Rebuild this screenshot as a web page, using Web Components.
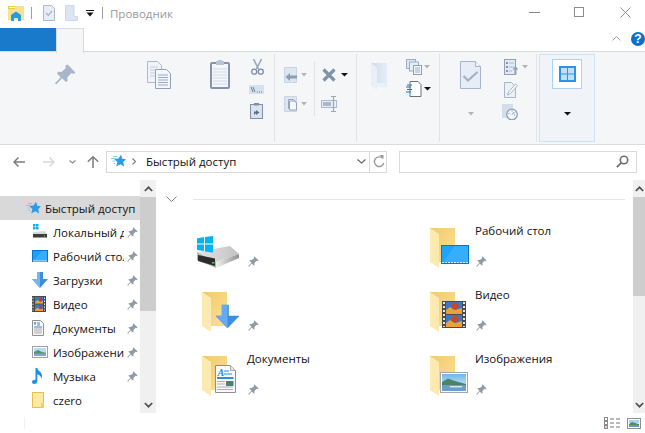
<!DOCTYPE html>
<html lang="ru">
<head>
<meta charset="utf-8">
<title>Проводник</title>
<style>
  html, body { margin: 0; height: 100%; background: #fff; overflow: hidden; }
  body { font: 11.5px "Open Sans", "Noto Sans", sans-serif; color: #111; }
</style>
</head>
<body>
<x-explorer></x-explorer>
<script>
// folder drawn in a 48x48 box, the overlays sit on top of it
const FOLDER = `
  <defs><linearGradient id="fb" x1="0" y1="0" x2="1" y2="1"><stop offset="0" stop-color="#eecb72"/><stop offset="1" stop-color="#ffe08c"/></linearGradient></defs>
  <rect x="8" y="4" width="25" height="34" fill="url(#fb)"/>
  <polygon points="8,4 17,10 17,44 8,38" fill="#fdeab0"/>`;

const ICONS = {
  // ---- small pin and ribbon glyphs
  pin: [11, 11, `<path fill="#8f9ba6" d="M6.6.4l4 4-.9.8-1.1-.4-2.2 2.3.2 1.8-.9.6-2-2L1 10.7l-.7-.7 3.2-3.2-2-2 .6-.9 1.8.2 2.3-2.2-.4-1.1z"/>`],
  bigpin: [21, 21, `<path fill="#a9b6c8" d="M12.6.6l7.8 7.8-1.8 1.5-2.2-.8-4.2 4.4.4 3.4-1.7 1.2-3.8-3.8L1.2 20.4 0 19.2l5.7-5.9-3.8-3.8 1.2-1.8 3.4.4 4.4-4.2-.8-2.2z"/>`],
  arrow: [6, 4, `<polygon points="0,0 6,0 3,3.5" fill="#b4b4b4"/>`],
  arrowk: [7, 4, `<polygon points="0,0 7,0 3.5,3.5" fill="#111"/>`],
  qatarrow: [8, 7, `<rect x="0" y="0" width="8" height="1" fill="#111"/><polygon points="0.5,2.5 7.5,2.5 4,6.5" fill="#111"/>`],
  appicon: [16, 15, `<rect x="0" y="0" width="16" height="14" fill="#fbe08f"/><rect x="0" y="0" width="7" height="3" fill="#f2c94f"/><rect x="1" y="1" width="6" height="1" fill="#fff"/><path fill="#1f9bea" d="M3 15V9l5-3.500L13 9v6h-3v-3H6v3z"/>`],
  qatcheck: [12, 16, `<path d="M.5.5h8l3 3v12H.5z" fill="#e6edf6" stroke="#a9bad0"/><path d="M3 8l2.300 2.300L9 6" fill="none" stroke="#a3b2c6" stroke-width="1.2"/>`],
  qatdoc: [13, 16, `<path d="M.5.5h8.5v11l3.500.1v3.900H.5z" fill="#dce6f3" stroke="#ccd8e8"/>`],
  copy: [24, 28, `<path d="M.5.5h10l4 4v17H.5z" fill="#f0f3f8" stroke="#aab9cc"/><g stroke="#c3cedd"><path d="M3 6h8M3 9h8M3 12h8M3 15h8"/></g><path d="M8.500 8.500h11l4 4v15h-15z" fill="#f5f7fa" stroke="#8ea2bc"/><g stroke="#99a9bf"><path d="M11 14h10M11 16.500h10M11 19h10M11 21.500h10M11 24h10"/></g>`],
  paste: [20, 29, `<rect x="1" y="3" width="18" height="25" rx="1" fill="#f3f6fa" stroke="#8494ad" stroke-width="2"/><rect x="6" y="1" width="8" height="4" fill="#b9c4d3"/><rect x="8" y="0" width="4" height="2" fill="#b9c4d3"/><g stroke="#cfd9e6"><path d="M3 9h14M3 12h14M3 15h14M3 18h14M3 21h14M3 24h14"/></g>`],
  scissors: [13, 16, `<path d="M2.500 0L7.500 10M10.500 0L5.500 10" stroke="#98a6ba" stroke-width="1.6" fill="none"/><circle cx="3.200" cy="12.700" r="2.500" fill="none" stroke="#7b8ba4" stroke-width="1.3"/><circle cx="9.800" cy="12.700" r="2.500" fill="none" stroke="#7b8ba4" stroke-width="1.3"/>`],
  pathbtn: [15, 9, `<rect width="15" height="9" fill="#d7e1ee"/><path d="M2 2l2 5M4 2l2 5" stroke="#6f7f97"/><path d="M8 7h1M10 7h1M12 7h1" stroke="#6f7f97"/>`],
  shortcut: [13, 16, `<rect x=".5" y="1.500" width="12" height="14" fill="#dbe3ee" stroke="#8090a8"/><rect x="4" y="0" width="5" height="2.500" fill="#8090a8"/><path d="M4 12V8.500h2V7l3.500 2.500L6 12v-1.600H5.600z" fill="#606f88"/>`],
  moveto: [13, 16, `<path d="M.5.5h12v15H.5z" fill="#dce6f2" stroke="#c9d5e5"/><path d="M6 8.500h7v3H6v2.500L1.500 10 6 6z" fill="#8c9cb4"/>`],
  copyto: [13, 16, `<path d="M.5.5h12v15H.5z" fill="#dce6f2" stroke="#c9d5e5"/><path d="M4.500 3.500h5l2 2v7h-7z" fill="#eef2f8" stroke="#93a3b9"/><path d="M6.500 6h5l2 2v7h-7z" fill="#f5f7fa" stroke="#93a3b9" transform="translate(-1 -1)"/>`],
  del: [14, 14, `<path d="M1.500 1.500l11 11M12.500 1.500l-11 11" stroke="#8193ab" stroke-width="3.2"/>`],
  rename: [16, 16, `<rect x=".5" y="4.500" width="15" height="7" fill="#e8eef6" stroke="#a9b8cc"/><rect x="2" y="6" width="8" height="4" fill="#a9b8cc"/><path d="M10 .5h5M12.500.5v15M10 15.500h5" stroke="#98a8bd" stroke-width="1.2"/>`],
  newfolder: [18, 27, `<defs><linearGradient id="nf" x1="0" y1="0" x2="1" y2="0"><stop offset="0" stop-color="#cfdcee"/><stop offset="1" stop-color="#e6edf6"/></linearGradient></defs><rect x="0" y="0" width="16" height="23" fill="url(#nf)"/><polygon points="0,0 6,5 6,27 0,23" fill="#e9eff7"/><polygon points="14,20 18,24 6,24 6,20" fill="#eaf0f7"/>`],
  newitem: [16, 16, `<rect x=".5" y=".5" width="9" height="9" fill="#dfe7f1" stroke="#9cadc2"/><rect x="3.500" y="3" width="9" height="9" fill="#e8eef6" stroke="#9cadc2"/><rect x="7.500" y="6.500" width="8" height="9" fill="#f3f6fa" stroke="#8c9db4"/><path d="M9 9h5M9 11h5M9 13h5" stroke="#9cadc2"/>`],
  easy: [16, 16, `<path d="M4 .5h8l3 3v12H4z" fill="#fff" stroke="#707070"/><path d="M0 7h5M1 9.500h5M0 12h5M1 5h5" stroke="#1a73c4" transform="translate(0 -1)"/>`],
  props: [21, 28, `<path d="M.5.5h15l5 5v22H.5z" fill="#e6edf6" stroke="#a5b4ca"/><path d="M15.500.5v5h5" fill="#f7f9fc" stroke="#a5b4ca"/><path d="M3.500 15l4.500 4.500L17.500 11" fill="none" stroke="#a4b1c3" stroke-width="2.2"/>`],
  open: [14, 16, `<rect x=".5" y=".5" width="11" height="15" fill="#e4ebf4" stroke="#8fa0b6"/><path d="M2 3h2v2H2zM2 7h2v2H2zM2 11h2v2H2z" fill="#8796ac"/><path d="M5 4h5M5 8h5M5 12h3" stroke="#aeb9c8"/><path d="M10.500 15.500v-5h-2l3-3.500 3 3.500h-2v5z" fill="#8fa0b6"/>`],
  edit: [14, 16, `<path d="M.5.5h7l4 4v11H.5z" fill="#ecf1f7" stroke="#a6b5c9"/><path d="M3.500 13l1-3 7-8 2 1.600-7 8z" fill="#fafbfd" stroke="#a6b5c9"/>`],
  history: [16, 16, `<rect x="0" y="0" width="11" height="14" fill="#d3deeb"/><circle cx="10" cy="10.500" r="5.300" fill="#f2f5f9" stroke="#8c9cb2" stroke-width="1.2"/><path d="M10 10.500l2.500-2.500M7 9v1M10 6.500v1M13 11h-1" stroke="#748399"/>`],
  tiles: [17, 16, `<rect x="1" y="1" width="15" height="14" fill="#bfe0f9" stroke="#2e93e6" stroke-width="2"/><path d="M1 8h15M8.500 1v14" stroke="#2e93e6"/>`],

  // ---- window and toolbar glyphs
  minimize: [11, 1, `<rect width="11" height="1" fill="#8c8c8c"/>`],
  maximize: [10, 10, `<rect x=".5" y=".5" width="9" height="9" fill="none" stroke="#8c8c8c"/>`],
  close: [11, 11, `<path d="M.5.5l10 10M10.500.5l-10 10" stroke="#8c8c8c" fill="none"/>`],
  chevup: [9, 5, `<path d="M.5 4.500l4-4 4 4" fill="none" stroke="#a3a3a3"/>`],
  help: [14, 14, `<circle cx="7" cy="7" r="7" fill="#0c6fc9"/><text x="7" y="11" font-family="Liberation Sans" font-weight="700" font-size="12" fill="#fff" text-anchor="middle">?</text>`],
  back: [12, 10, `<path d="M5.500.5L1 5l4.500 4.500M1.500 5H12" fill="none" stroke="#7c7c7c" stroke-width="1.5"/>`],
  forward: [12, 10, `<path d="M6.500.5L11 5l-4.500 4.500M10.500 5H0" fill="none" stroke="#d9d9d9" stroke-width="1.5"/>`],
  recent: [7, 4, `<path d="M.5.5L3.500 3l3-2.500" fill="none" stroke="#8a8a8a" stroke-width="1.2"/>`],
  up: [12, 12, `<path d="M.8 5.800L6 .8l5.200 5M6 1.200V12" fill="none" stroke="#7c7c7c" stroke-width="1.5"/>`],
  crumb: [4, 7, `<path d="M.5.5l3 3-3 3" fill="none" stroke="#7a7a7a" stroke-width="1.1"/>`],
  drop: [9, 5, `<path d="M.5.5l4 3.500 4-3.500" fill="none" stroke="#666" stroke-width="1.2"/>`],
  refresh: [12, 13, `<path d="M9.500 3.200A4.800 4.800 0 1 0 10.800 8" fill="none" stroke="#9a9a9a" stroke-width="1.4"/><polygon points="6.500,0 10.500,0 10.500,4" fill="#9a9a9a"/>`],
  search: [13, 13, `<circle cx="8" cy="5" r="3.700" fill="none" stroke="#6e6e6e" stroke-width="1.6"/><path d="M5.200 7.800L.8 12.200" stroke="#6e6e6e" stroke-width="1.8"/>`],
  sbup: [9, 6, `<path d="M.8 5L4.500 1.300 8.200 5" fill="none" stroke="#505050" stroke-width="1.7"/>`],
  sbdown: [9, 6, `<path d="M.8 1L4.500 4.700 8.200 1" fill="none" stroke="#505050" stroke-width="1.7"/>`],
  collapse: [11, 6, `<path d="M.5.5l5 5 5-5" fill="none" stroke="#808080"/>`],
  listview: [17, 12, `<rect x=".5" y=".5" width="3" height="3" fill="none" stroke="#8a8a8a"/><rect x=".5" y="4.500" width="3" height="3" fill="none" stroke="#8a8a8a"/><rect x=".5" y="8.500" width="3" height="3" fill="#fff" stroke="#8a8a8a"/><rect x="1.500" y="9.500" width="1" height="1" fill="#d33"/><path d="M6 2h4M12 2h4M6 6h4M12 6h4M6 10h4M12 10h4" stroke="#777"/>`],
  tileview: [14, 11, `<rect x=".5" y=".5" width="13" height="10" fill="#fff" stroke="#8f8f8f"/><rect x="2" y="2" width="10" height="3" fill="#a8d3f0"/><path d="M2 6l3-2 3 1 4 1v3H2z" fill="#4f8a6c"/><rect x="2" y="7" width="10" height="2" fill="#6b95bd"/>`],

  // ---- sidebar icons, 16px
  star: [15, 15, `<path fill="#2b9ce8" d="M10 .8l1.300 4 3.700.4-2.800 2.800.9 4.500-3.800-2.300-4 2.200 1-4.400-3-2.900 4.200-.5z"/><path d="M6 2.500H2M5 4.500H0M4 7H1.500M4 9.500H2.500" stroke="#7cc6f2" stroke-width=".9"/>`],
  navdrive: [16, 16, `<rect x="1" y="0" width="2.500" height="2.500" fill="#16a9ea"/><rect x="4" y="0" width="2.500" height="2.500" fill="#16a9ea"/><rect x="1" y="3" width="2.500" height="2.500" fill="#16a9ea"/><rect x="4" y="3" width="2.500" height="2.500" fill="#16a9ea"/><path d="M1 8l12-1 2 2.500V11H1z" fill="#d7d7d7"/><rect x="1" y="10" width="14" height="4" fill="#3b3b3b"/><rect x="1" y="13" width="14" height="1" fill="#9a9a9a"/><rect x="12" y="11.500" width="1" height="1" fill="#4ee24e"/>`],
  desktop: [16, 12, `<rect x=".5" y=".5" width="15" height="11" fill="#1f9dfb" stroke="#0b74c6"/><polygon points="1,11 10,1 15,1 15,11" fill="#35acfc"/><rect x="1" y="10.500" width="14" height="1" fill="#cfe9fd"/>`],
  download: [16, 16, `<path fill="#3b8fdf" d="M5 0h6v7h5l-8 9-8-9h5z"/><path fill="#72b5ef" d="M5 0h3v16L0 7h5z"/>`],
  film: [14, 16, `<rect width="14" height="16" fill="#4a4a4a"/><rect x="3" y="1" width="8" height="6.500" fill="#3e77c4"/><rect x="3" y="8.500" width="8" height="6.500" fill="#3e77c4"/><path d="M3 6l3-2 2 2 3-1v2.500H3zM3 13.500l3-2 2 2 3-1V15H3z" fill="#e8a23a"/><rect x="7" y="2" width="3" height="3" fill="#c33"/><rect x="7" y="9.500" width="3" height="3" fill="#c33"/><path d="M1 1.500v13M12.500 1.500v13" stroke="#e4e4e4" stroke-dasharray="1.500 1.500"/>`],
  doc: [12, 16, `<path d="M.5.5h8l3 3v12H.5z" fill="#fafafa" stroke="#8f8f8f"/><path d="M2 3h2M3 2v3" stroke="#2b8ad6"/><path d="M5 3h3M5 5h3M2 7h8" stroke="#2b8ad6"/><path d="M2 9h8M2 11h8M2 13h8" stroke="#a6a6a6"/>`],
  picture: [16, 12, `<rect x=".5" y=".5" width="15" height="11" fill="#fff" stroke="#a0a0a0"/><rect x="2" y="2" width="12" height="4" fill="#b5dcf4"/><path d="M2 6l4-2 4 2 4 .5V8H2z" fill="#5b8f72"/><rect x="2" y="7.500" width="12" height="2.500" fill="#7fa7cb"/>`],
  music: [11, 16, `<path fill="#1d8fe6" d="M3.500 0h1.800c.3 3 4.700 3.500 4.700 8 0 1-.3 2-.8 2.800.1-2.800-2.200-4-3.900-4.600V13c0 1.800-1.400 3-3.200 3C.8 16 0 15.200 0 14c0-1.400 1.500-2.400 3.500-2.200z"/>`],
  navfolder: [12, 16, `<rect x=".5" y=".5" width="11" height="15" fill="#fde9a1" stroke="#e8c04a"/><rect x="9" y="11" width="3" height="5" fill="#f4cf5a"/>`],

  // ---- large tile icons, 48px box
  drive: [48, 48, `
    <defs><linearGradient id="t" x1="0" y1="0" x2="1" y2="0"><stop offset="0" stop-color="#e4e4e4"/><stop offset="1" stop-color="#c2c2c2"/></linearGradient>
    <linearGradient id="s" x1="0" y1="0" x2="1" y2="0"><stop offset="0" stop-color="#f2f2f2"/><stop offset="1" stop-color="#8f8f8f"/></linearGradient></defs>
    <polygon points="3,28 36,22 45,30 22,38" fill="url(#t)"/>
    <polygon points="3,28 22,38 22,44 3,36" fill="#b7b7b7"/>
    <polygon points="22,38 45,30 45,34 22,44" fill="url(#s)"/>
    <polygon points="4,31 21,34.500 21,42 4,37" fill="#2d2d2d"/>
    <rect x="18" y="38" width="2.500" height="1.500" fill="#3ede3e"/>
    <polygon points="3,14.500 10,13 10,19.500 3,19.500" fill="#00b4f0"/><polygon points="11,13 19,12 19,19.500 11,19.500" fill="#00b4f0"/>
    <polygon points="3,20.500 10,20.500 10,27 3,26" fill="#00b4f0"/><polygon points="11,20.500 19,20.500 19,28.500 11,27.500" fill="#00b4f0"/>`],
  fdownload: [48, 48, FOLDER + `
    <path fill="#3c8fe0" stroke="#2d7fce" stroke-width=".5" d="M28 17h6.500v11H45L33.500 40 22 28h6z"/><path fill="#63adee" d="M28 17h5.500v23L22 28h6z"/>`],
  fdesktop: [48, 48, FOLDER + `
    <rect x="19.500" y="21.500" width="27" height="18" fill="#1ea4ff" stroke="#0b73c4"/><polygon points="21,38 33,22 46,22 46,38" fill="#35aefc"/>
    <path d="M20 38.500h26" stroke="#d7eefe" stroke-dasharray="2 1"/>`],
  fvideo: [48, 48, FOLDER + `
    <rect x="20" y="13" width="24" height="27" fill="#4a4a4a"/><rect x="24" y="14" width="16" height="12" fill="#3e77c4"/><rect x="24" y="27" width="16" height="12" fill="#3e77c4"/>
    <path d="M24 22l4-3 5 3 7-2v6H24zM24 35l4-3 5 3 7-2v6H24z" fill="#e8a23a"/><circle cx="33" cy="18" r="3.500" fill="#c8462e"/><circle cx="33" cy="31" r="3.500" fill="#c8462e"/>
    <path d="M22 14v25M42 14v25" stroke="#e6e6e6" stroke-width="2" stroke-dasharray="2 2"/>`],
  fdocs: [48, 48, FOLDER + `
    <path d="M21.500 13.500h15l5 5v22h-20z" fill="#fafafa" stroke="#8f8f8f"/><path d="M36.500 13.500v5h5" fill="#e4e4e4" stroke="#a8a8a8"/>
    <text x="23.500" y="24" font-family="Liberation Serif" font-style="italic" font-weight="700" font-size="10" fill="#1f8be0">A</text>
    <path d="M30 19h5M30 22h8M23 25.500h16.500M23 26.500h16.500" stroke="#2b8ee0"/><path d="M23 29.500h8M23 32h8M23 35h16M23 37.500h16" stroke="#aeaeae"/>
    <rect x="32" y="29" width="7.500" height="5" fill="#4f7f76"/>`],
  fpicture: [48, 48, FOLDER + `
    <defs><linearGradient id="sky" x1="0" y1="0" x2="0" y2="1"><stop offset="0" stop-color="#6db8ea"/><stop offset="1" stop-color="#e6f4fa"/></linearGradient></defs>
    <rect x="18.500" y="20.500" width="27" height="20" fill="#fff" stroke="#a6a6a6"/><rect x="20" y="22" width="24" height="17" fill="url(#sky)" />
    <path d="M20 30l6-3.500 7 2.500 11 3v1H20z" fill="#4c8469"/><rect x="20" y="33" width="24" height="6" fill="#6a9fca"/><rect x="28" y="34" width="12" height="1.500" fill="#cfe3ef"/>`],
};

class XIcon extends HTMLElement {
  connectedCallback() {
    const [w, h, body] = ICONS[this.getAttribute('name')];
    this.attachShadow({ mode: 'open' }).innerHTML = `
      <style>:host { display: block; flex: none; width: ${w}px; height: ${h}px; } svg { display: block; }</style>
      <svg width="${w}" height="${h}" viewBox="0 0 ${w} ${h}">${body}</svg>`;
  }
}

class XTitlebar extends HTMLElement {
  connectedCallback() {
    this.attachShadow({ mode: 'open' }).innerHTML = `
      <style>
        :host { display: flex; align-items: center; height: 28px; padding: 0 0 2px 8px; box-sizing: border-box; color: #999; }
        .sep { width: 1px; height: 12px; background: #9f9f9f; }
        .title { margin-left: 7px; flex: 1; }
        .ctl { display: flex; align-items: center; margin-right: 14px; padding-bottom: 2px; }
      </style>
      <x-icon name="appicon"></x-icon>
      <span class="sep" style="margin-left:7px"></span>
      <x-icon name="qatcheck" style="margin-left:11px"></x-icon>
      <x-icon name="qatdoc" style="margin-left:10px"></x-icon>
      <x-icon name="qatarrow" style="margin-left:8px"></x-icon>
      <span class="sep" style="margin-left:8px"></span>
      <span class="title">Проводник</span>
      <div class="ctl">
        <x-icon name="minimize"></x-icon>
        <x-icon name="maximize" style="margin-left:34px"></x-icon>
        <x-icon name="close" style="margin-left:36px"></x-icon>
      </div>`;
  }
}

class XTabs extends HTMLElement {
  connectedCallback() {
    this.attachShadow({ mode: 'open' }).innerHTML = `
      <style>
        :host { display: flex; align-items: stretch; height: 24px; box-sizing: border-box; border-bottom: 1px solid #dadbdc; }
        .file { width: 56px; background: #1979ca; }
        .tab { width: 26px; height: 24px; background: #f5f6f7; border: 1px solid #dadbdc; border-bottom: 0; }
        .right { flex: 1; display: flex; align-items: center; justify-content: flex-end; gap: 10px; padding-bottom: 2px; }
      </style>
      <div class="file"></div>
      <div class="tab"></div>
      <div class="right">
        <x-icon name="chevup"></x-icon>
        <x-icon name="help"></x-icon>
      </div>`;
  }
}

class XRibbon extends HTMLElement {
  connectedCallback() {
    // each group is a row, the stacked small buttons are columns inside it
    this.attachShadow({ mode: 'open' }).innerHTML = `
      <style>
        :host { display: flex; height: 93px; box-sizing: border-box; padding-top: 2px; background: #f5f6f7; border-bottom: 1px solid #dadbdc; }
        .group { display: flex; align-items: flex-start; height: 88px; box-sizing: border-box; border-right: 1px solid #e1e3e6; }
        .col { display: flex; flex-direction: column; align-items: flex-start; }
        .btn { display: flex; align-items: center; gap: 4px; }
        .inner { width: 1px; height: 55px; margin-top: 7px; background: #e1e3e6; }
        .active { width: 54px; height: 86px; margin-left: 2px; display: flex; flex-direction: column; align-items: center;
                  background: #f0f4f9; border: 1px solid #cce4f7; }
        .view { width: 28px; height: 28px; margin-top: 4px; display: flex; align-items: center; justify-content: center;
                background: #fff; border: 1px solid #a9d4f7; }
      </style>
      <div class="group" style="width:275px">
        <x-icon name="bigpin" style="margin:10px 0 0 55px"></x-icon>
        <x-icon name="copy" style="margin:7px 0 0 71px"></x-icon>
        <x-icon name="paste" style="margin:6px 0 0 39px"></x-icon>
        <div class="col" style="margin:5px 0 0 19px">
          <x-icon name="scissors" style="margin-left:2px"></x-icon>
          <x-icon name="pathbtn" style="margin-top:10px"></x-icon>
          <x-icon name="shortcut" style="margin:9px 0 0 1px"></x-icon>
        </div>
      </div>
      <div class="group" style="width:82px">
        <div class="col" style="margin:13px 0 0 9px">
          <div class="btn"><x-icon name="moveto"></x-icon><x-icon name="arrow"></x-icon></div>
          <div class="btn" style="margin-top:13px"><x-icon name="copyto"></x-icon><x-icon name="arrow"></x-icon></div>
        </div>
        <div class="inner" style="margin-left:7px"></div>
        <div class="col" style="margin:14px 0 0 7px">
          <div class="btn"><x-icon name="del"></x-icon><x-icon name="arrowk" style="margin-left:1px"></x-icon></div>
          <x-icon name="rename" style="margin:14px 0 0 -1px"></x-icon>
        </div>
      </div>
      <div class="group" style="width:83px">
        <x-icon name="newfolder" style="margin:9px 0 0 14px"></x-icon>
        <div class="col" style="margin:5px 0 0 17px">
          <div class="btn" style="gap:2px"><x-icon name="newitem"></x-icon><x-icon name="arrow"></x-icon></div>
          <div class="btn" style="gap:2px;margin-top:6px"><x-icon name="easy"></x-icon><x-icon name="arrowk"></x-icon></div>
        </div>
      </div>
      <div class="group" style="width:97px">
        <div class="col" style="margin:7px 0 0 20px;align-items:center">
          <x-icon name="props"></x-icon>
          <x-icon name="arrow" style="margin-top:23px"></x-icon>
        </div>
        <div class="col" style="margin:5px 0 0 21px">
          <div class="btn" style="gap:4px;margin-left:2px"><x-icon name="open"></x-icon><x-icon name="arrow"></x-icon></div>
          <x-icon name="edit" style="margin:7px 0 0 2px"></x-icon>
          <x-icon name="history" style="margin-top:6px"></x-icon>
        </div>
      </div>
      <div class="active">
        <div class="view"><x-icon name="tiles"></x-icon></div>
        <x-icon name="arrowk" style="margin-top:23px"></x-icon>
      </div>`;
  }
}

class XAddressbar extends HTMLElement {
  connectedCallback() {
    this.attachShadow({ mode: 'open' }).innerHTML = `
      <style>
        :host { display: flex; align-items: center; height: 35px; box-sizing: border-box; padding: 0 8px 2px 13px; color: #111; }
        .box { display: flex; align-items: center; height: 22px; box-sizing: border-box; border: 1px solid #d9d9d9; }
        .addr { width: 281px; margin-left: 7px; padding-left: 4px; }
        .find { width: 238px; margin-left: 12px; justify-content: flex-end; padding-right: 7px; }
        .path { flex: 1; margin-left: 10px; }
        .split { width: 1px; height: 20px; margin: 0 3px 0 3px; background: #d9d9d9; }
      </style>
      <x-icon name="back"></x-icon>
      <x-icon name="forward" style="margin-left:18px"></x-icon>
      <x-icon name="recent" style="margin-left:14px"></x-icon>
      <x-icon name="up" style="margin-left:11px"></x-icon>
      <div class="box addr">
        <x-icon name="star"></x-icon>
        <x-icon name="crumb" style="margin-left:6px"></x-icon>
        <span class="path">Быстрый доступ</span>
        <x-icon name="drop"></x-icon>
        <span class="split"></span>
        <x-icon name="refresh" style="margin-right:1px"></x-icon>
      </div>
      <div class="box find"><x-icon name="search"></x-icon></div>`;
  }
}

class XScrollbar extends HTMLElement {
  connectedCallback() {
    this.attachShadow({ mode: 'open' }).innerHTML = `
      <style>
        :host { display: flex; flex-direction: column; align-items: center; flex: none; box-sizing: border-box; background: #f0f0f0; }
        .btn { display: flex; align-items: center; justify-content: center; height: 17px; width: 100%; flex: none; }
        .thumb { width: 100%; height: ${this.getAttribute('thumb')}px; background: #cdcdcd; flex: none; }
        .fill { flex: 1; }
      </style>
      <div class="btn"><x-icon name="sbup"></x-icon></div>
      <div class="thumb"></div>
      <div class="fill"></div>
      <div class="btn"><x-icon name="sbdown"></x-icon></div>`;
  }
}

class XNavItem extends HTMLElement {
  connectedCallback() {
    const pinned = this.hasAttribute('pinned');
    const top = this.hasAttribute('selected');
    this.attachShadow({ mode: 'open' }).innerHTML = `
      <style>
        :host { display: flex; align-items: center; height: 24px; padding-left: ${top ? 26 : 32}px; box-sizing: border-box; }
        :host([selected]) { background: #d9d9d9; }
        .ico { width: ${top ? 19 : 21}px; display: flex; flex: none; }
        .label { flex: 1; min-width: 0; overflow: hidden; white-space: nowrap; }
        .pin { width: 16px; flex: none; }
      </style>
      <div class="ico"><x-icon name="${this.getAttribute('icon')}"></x-icon></div>
      <span class="label"><slot></slot></span>
      ${pinned ? '<div class="pin"><x-icon name="pin" style="margin-left:3px"></x-icon></div>' : ''}`;
  }
}

class XTile extends HTMLElement {
  connectedCallback() {
    this.attachShadow({ mode: 'open' }).innerHTML = `
      <style>
        :host { display: flex; height: 64px; }
        .ico { width: 53px; flex: none; }
        .side { display: flex; flex-direction: column; justify-content: space-between; height: 44px; margin-top: -1px; padding-bottom: 1px; }
      </style>
      <div class="ico"><x-icon name="${this.getAttribute('icon')}"></x-icon></div>
      <div class="side">
        <span><slot></slot></span>
        <x-icon name="pin" style="margin-left:1px"></x-icon>
      </div>`;
  }
}

class XContent extends HTMLElement {
  connectedCallback() {
    this.attachShadow({ mode: 'open' }).innerHTML = `
      <style>
        :host { display: block; flex: 1; min-width: 0; overflow: hidden; }
        .head { display: flex; align-items: center; height: 44px; padding: 0 8px 6px 10px; box-sizing: border-box; }
        .line { flex: 1; height: 1px; margin-left: 16px; background: #e5e5e5; }
        .grid { display: grid; grid-template-columns: 228px 228px; padding-left: 38px; }
      </style>
      <div class="head"><x-icon name="collapse"></x-icon><div class="line"></div></div>
      <div class="grid"><slot></slot></div>`;
  }
}

class XStatusbar extends HTMLElement {
  connectedCallback() {
    this.attachShadow({ mode: 'open' }).innerHTML = `
      <style>
        :host { display: flex; align-items: center; justify-content: flex-end; height: 20px; padding-right: 4px; gap: 6px; }
        .mark { width: 1px; height: 12px; background: #f0f0f0; margin-right: auto; margin-left: 24px; }
      </style>
      <div class="mark"></div>
      <x-icon name="listview"></x-icon>
      <x-icon name="tileview"></x-icon>`;
  }
}

class XExplorer extends HTMLElement {
  connectedCallback() {
    this.attachShadow({ mode: 'open' }).innerHTML = `
      <style>
        :host { display: block; width: 645px; height: 433px; overflow: hidden; }
        .work { display: flex; height: 233px; }
        .nav { width: 140px; flex: none; padding-top: 16px; box-sizing: border-box; overflow: hidden; }
      </style>
      <x-titlebar></x-titlebar>
      <x-tabs></x-tabs>
      <x-ribbon></x-ribbon>
      <x-addressbar></x-addressbar>
      <div class="work">
        <div class="nav">
          <x-nav-item icon="star" selected>Быстрый доступ</x-nav-item>
          <x-nav-item icon="navdrive" pinned>Локальный диск</x-nav-item>
          <x-nav-item icon="desktop" pinned>Рабочий стол</x-nav-item>
          <x-nav-item icon="download" pinned>Загрузки</x-nav-item>
          <x-nav-item icon="film" pinned>Видео</x-nav-item>
          <x-nav-item icon="doc" pinned>Документы</x-nav-item>
          <x-nav-item icon="picture" pinned>Изображения</x-nav-item>
          <x-nav-item icon="music" pinned>Музыка</x-nav-item>
          <x-nav-item icon="navfolder">czero</x-nav-item>
        </div>
        <x-scrollbar thumb="114" style="width:16px"></x-scrollbar>
        <x-content>
          <x-tile icon="drive"></x-tile>
          <x-tile icon="fdesktop">Рабочий стол</x-tile>
          <x-tile icon="fdownload"></x-tile>
          <x-tile icon="fvideo">Видео</x-tile>
          <x-tile icon="fdocs">Документы</x-tile>
          <x-tile icon="fpicture">Изображения</x-tile>
        </x-content>
        <x-scrollbar thumb="99" style="width:12px"></x-scrollbar>
      </div>
      <x-statusbar></x-statusbar>`;
  }
}

customElements.define('x-icon', XIcon);
customElements.define('x-titlebar', XTitlebar);
customElements.define('x-tabs', XTabs);
customElements.define('x-ribbon', XRibbon);
customElements.define('x-addressbar', XAddressbar);
customElements.define('x-scrollbar', XScrollbar);
customElements.define('x-nav-item', XNavItem);
customElements.define('x-tile', XTile);
customElements.define('x-content', XContent);
customElements.define('x-statusbar', XStatusbar);
customElements.define('x-explorer', XExplorer);
</script>
</body>
</html>
